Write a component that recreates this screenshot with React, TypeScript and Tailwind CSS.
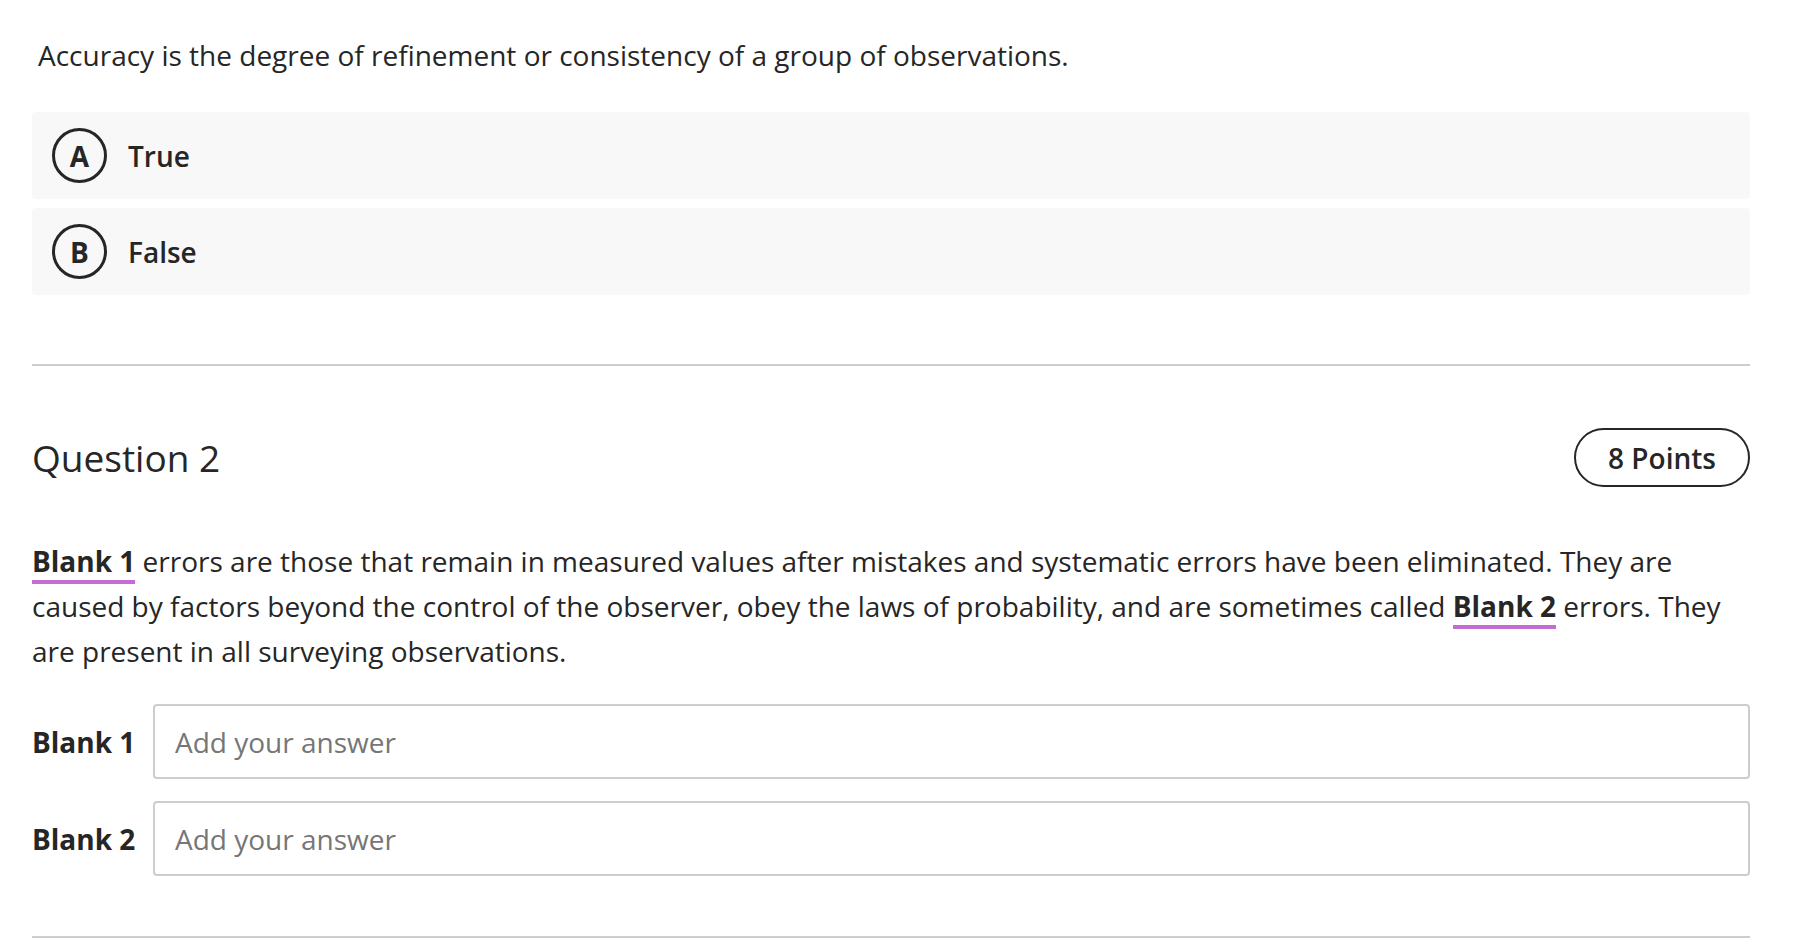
import React from "react"

const font = { fontFamily: '"Open Sans", "Noto Sans", sans-serif' }

function Option({ letter, label }: { letter: string; label: string }) {
  return (
    <div className="flex h-[87px] items-center rounded-[4px] bg-[#f8f8f8] pl-5">
      <div className="flex h-[55px] w-[55px] items-center justify-center rounded-full border-[3px] border-[#262626] text-[28px] font-bold leading-none text-[#262626]">
        {letter}
      </div>
      <span className="ml-[21px] text-[28px] font-semibold text-[#262626]">{label}</span>
    </div>
  )
}

function BlankRef({ children }: { children: React.ReactNode }) {
  return (
    <span className="border-b-4 border-[#c46bd4] font-bold">{children}</span>
  )
}

function BlankInput({ label }: { label: string }) {
  return (
    <div className="flex items-center">
      <span className="w-[121px] shrink-0 text-[28px] font-bold text-[#262626]">{label}</span>
      <input
        placeholder="Add your answer"
        className="h-[75px] flex-1 rounded-[4px] border-2 border-[#cdcdcd] bg-white px-5 text-[28px] text-[#262626] outline-none placeholder:text-[#767676]"
        style={font}
      />
    </div>
  )
}

export default function App() {
  return (
    <div className="min-h-screen bg-white text-[#262626]" style={font}>
      <div className="ml-8 w-[1718px] pt-[34px]">
        {/* previous question */}
        <p className="pl-[6px] text-[28px]">
          Accuracy is the degree of refinement or consistency of a group of observations.
        </p>

        <div className="mt-[36px] flex flex-col gap-[9px]">
          <Option letter="A" label="True" />
          <Option letter="B" label="False" />
        </div>

        <hr className="mt-[69px] border-t-2 border-[#cdcdcd]" />

        {/* Question 2 */}
        <div className="mt-[62px] flex items-center justify-between">
          <h2 className="text-[37px] font-normal">Question 2</h2>
          <div className="flex h-[59px] w-[176px] items-center justify-center rounded-full border-2 border-[#262626] text-[28px] font-semibold">
            8 Points
          </div>
        </div>

        <p className="mt-[52px] text-[28px] leading-[45px]">
          <BlankRef>Blank 1</BlankRef> errors are those that remain in measured values after
          mistakes and systematic errors have been eliminated. They are caused by factors beyond
          the control of the observer, obey the laws of probability, and are sometimes called{" "}
          <BlankRef>Blank 2</BlankRef> errors. They are present in all surveying observations.
        </p>

        <div className="mt-[30px] flex flex-col gap-[22px]">
          <BlankInput label="Blank 1" />
          <BlankInput label="Blank 2" />
        </div>

        <hr className="mt-[60px] border-t-2 border-[#cdcdcd]" />
      </div>
    </div>
  )
}
